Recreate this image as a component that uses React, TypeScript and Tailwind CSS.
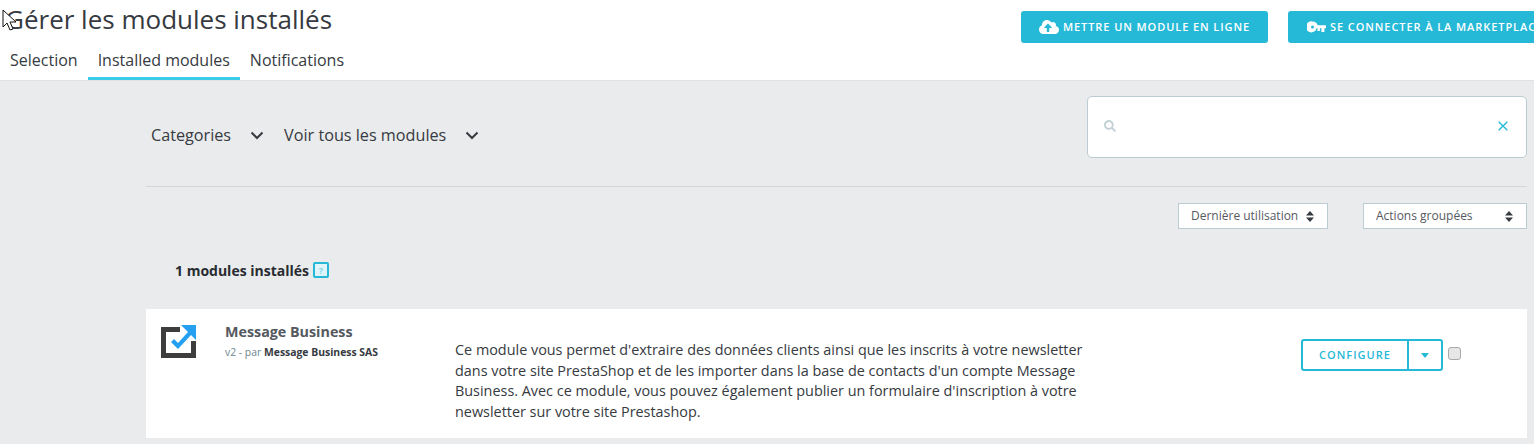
import { FaCloudUploadAlt, FaSearch } from "react-icons/fa";

const FONT = "font-['Open_Sans',sans-serif]";

function Chevron() {
  return (
    <svg width="14" height="9" viewBox="0 0 14 9" fill="none" className="shrink-0">
      <path d="M1.5 1.5 7 7l5.5-5.5" stroke="#363a41" strokeWidth="2" />
    </svg>
  );
}

function SortCaret() {
  return (
    <svg width="8" height="11" viewBox="0 0 8 11" className="shrink-0">
      <path d="M4 0 8 4.5H0zM4 11 0 6.5h8z" fill="#363a41" />
    </svg>
  );
}

function KeyIcon() {
  return (
    <svg width="19" height="12" viewBox="0 0 19 12" className="shrink-0">
      <path
        fillRule="evenodd"
        d="M5.5.5a5.5 5.5 0 0 1 5.2 3.7H19v3h-1.6V11h-3V7.2h-1.5V10h-2.4V7.2h-.8A5.5 5.5 0 1 1 5.5.5zm0 4a1.5 1.5 0 1 0 0 3 1.5 1.5 0 0 0 0-3z"
        fill="#fff"
      />
    </svg>
  );
}

function Logo() {
  return (
    <svg width="35" height="33" viewBox="0 0 35 33">
      <path d="M0 2h19v5H5v21h25V16h5v17H0z" fill="#3d3d3d" />
      <path d="M20 0h15v15l-5-5-13 14-7-7 3-3 4 4 10-11z" fill="#25a0f0" />
    </svg>
  );
}

export default function App() {
  return (
    <div className={`${FONT} relative h-[444px] w-[1534px] overflow-hidden bg-[#eaebec] text-[#363a41]`}>
      {/* cursor from the capture */}
      <svg width="15" height="22" viewBox="0 0 15 22" className="absolute left-[2px] top-[9px] z-10">
        <path d="M1 1v17l4-4 3 7 3-1-3-7h6z" fill="#fff" stroke="#111" strokeWidth="1" />
      </svg>

      <header className="h-[81px] border-b border-[#dfe1e3] bg-white">
        <div className="flex h-[50px] items-start justify-between">
          <h1 className="ml-[5px] mt-[1px] whitespace-nowrap text-[26px] leading-9 text-[#363a41]">Gérer les modules installés</h1>
          <div className="mt-[11px] flex shrink-0 gap-5 pl-5">
            <button className="flex h-[32px] w-[247px] items-center justify-center gap-[4px] rounded-[3px] bg-[#25b9d7] text-[11px] font-semibold tracking-[0.92px] text-white">
              <FaCloudUploadAlt className="text-[20px]" />
              METTRE UN MODULE EN LIGNE
            </button>
            <button className="-mr-[24px] flex h-[32px] w-[270px] items-center gap-[4px] whitespace-nowrap rounded-[3px] bg-[#25b9d7] pl-[19px] text-[11px] font-semibold tracking-[0.92px] text-white">
              <KeyIcon />
              SE CONNECTER À LA MARKETPLACE
            </button>
          </div>
        </div>
        <nav className="flex h-[30px] text-[16px] leading-5">
          <a className="px-[10px]">Selection</a>
          <a className="h-[30px] border-b-[3px] border-[#3ccbe8] px-[10px]">Installed modules</a>
          <a className="px-[10px]">Notifications</a>
        </nav>
      </header>

      <main className="ml-[146px] mr-[7px]">
        <section className="flex h-[106px] items-start justify-between border-b border-[#d3d5d8] pt-[15px]">
          <div className="mt-[27px] flex items-center text-[16.2px] leading-6">
            <span className="ml-[5px]">Categories</span>
            <span className="ml-[19px]"><Chevron /></span>
            <span className="ml-[20px]">Voir tous les modules</span>
            <span className="ml-[19px]"><Chevron /></span>
          </div>
          <div className="flex h-[62px] w-[440px] items-center justify-between rounded-[5px] border border-[#bbcdd2] bg-white pb-[3px] pl-[16px] pr-[18px]">
            <FaSearch className="text-[12px] text-[#c4d2d6]" />
            <svg width="10" height="10" viewBox="0 0 10 10" className="mt-[1px]">
              <path d="M.7.7l8.6 8.6M9.3.7.7 9.3" stroke="#25b9d7" strokeWidth="1.4" />
            </svg>
          </div>
        </section>

        <div className="mt-[16px] flex justify-end gap-[35px] text-[12px]">
          <div className="flex h-[26px] w-[150px] items-center justify-between border border-[#bbcdd2] bg-white pl-[12px] pr-[13px] text-[#55595f]">
            Dernière utilisation
            <SortCaret />
          </div>
          <div className="flex h-[26px] w-[164px] items-center justify-between border border-[#bbcdd2] bg-white pl-[12px] pr-[13px] text-[#55595f]">
            Actions groupées
            <SortCaret />
          </div>
        </div>

        <div className="ml-[29px] mt-[31px] flex h-[20px] items-center gap-[4px] text-[14px] font-bold text-[#282b30]">
          1 modules installés
          <span className="flex h-[16px] w-[16px] items-center justify-center rounded-[2px] border-2 border-[#25b9d7] bg-[#dff5f9] text-[9px] font-bold leading-none text-[#7cd5e7]">?</span>
        </div>

        <article className="mt-[29px] flex h-[129px] bg-white">
          <div className="ml-[15px] mt-[16px] shrink-0"><Logo /></div>
          <div className="ml-[29px] mt-[13px] w-[230px] shrink-0">
            <h3 className="text-[14.3px] font-bold leading-5 text-[#55595f]">Message Business</h3>
            <p className="mt-[2px] text-[10.4px] leading-4 text-[#6c868e]">
              v2 - par <span className="font-bold text-[#363a41]">Message Business SAS</span>
            </p>
          </div>
          <p className="mt-[31px] w-[650px] shrink-0 text-[14.4px] leading-[20.6px] text-[#363a41]">
            Ce module vous permet d'extraire des données clients ainsi que les inscrits à votre newsletter
            <br />dans votre site PrestaShop et de les importer dans la base de contacts d'un compte Message
            <br />Business. Avec ce module, vous pouvez également publier un formulaire d'inscription à votre
            <br />newsletter sur votre site Prestashop.
          </p>
          <div className="ml-[196px] mt-[30px] flex h-[32px] shrink-0 items-start">
            <div className="flex h-[32px] rounded-[3px] border-2 border-[#25b9d7]">
              <span className="flex w-[106px] items-center justify-center border-r-2 border-[#25b9d7] text-[11px] font-semibold tracking-[1px] text-[#25b9d7]">CONFIGURE</span>
              <span className="flex w-[32px] items-center justify-center">
                <svg width="8" height="5" viewBox="0 0 8 5"><path d="M0 0h8L4 5z" fill="#25b9d7" /></svg>
              </span>
            </div>
            <span className="ml-[5px] mt-[8px] h-[13px] w-[13px] rounded-[3px] border border-[#a9a9a9] bg-[#e6e6e6]" />
          </div>
        </article>
      </main>
    </div>
  );
}
